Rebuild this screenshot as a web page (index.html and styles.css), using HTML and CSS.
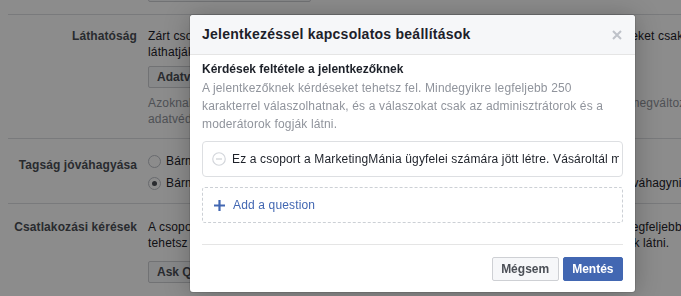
FILE: index.html
```html
<!DOCTYPE html>
<html lang="hu">
<head>
<meta charset="utf-8">
<title>Jelentkezéssel kapcsolatos beállítások</title>
<link rel="stylesheet" href="styles.css">
</head>
<body>
<div class="page">
  <div class="settings">
    <div class="row row-top">
      <div class="label"></div>
      <div class="content"><span class="btn">Csoporttípus módosítása</span></div>
    </div>
    <div class="row row-vis">
      <div class="label">Láthatóság</div>
      <div class="content">
        <p class="line">Zárt csoport: bárki megtalálhatja a csoportot és láthatja, hogy kik a tagja, de a bejegyzéseket csak</p>
        <p class="line">láthatják a tagok.</p>
        <span class="btn btn-gap">Adatvédelmi beállítás módosítása</span>
        <p class="line muted">Azoknak a csoportoknak, amelyeknek már több mint 5000 tagjuk van, utólag nem tudod megváltoztatni az</p>
        <p class="line muted">adatvédelmi beállításait.</p>
      </div>
    </div>
    <div class="row row-radio">
      <div class="label label-radio">Tagság jóváhagyása</div>
      <div class="content">
        <label class="radio"><span class="dot"></span>Bármelyik tag hozzáadhat új tagokat.</label>
        <label class="radio radio-2"><span class="dot dot-on"></span>Bármely tag hozzáadhat tagokat, de egy adminisztrátornak vagy egy moderátornak jóváhagynia kell őket.</label>
      </div>
    </div>
    <div class="row row-join">
      <div class="label">Csatlakozási kérések</div>
      <div class="content">
        <p class="line">A csoportodhoz csatlakozni kívánó személyeknek a csatlakozási kérelmük elküldésekor legfeljebb</p>
        <p class="line">tehetsz fel három kérdést. A válaszaikat csak az adminisztrátorok és a moderátorok fogják látni.</p>
        <span class="btn btn-gap2">Ask Questions</span>
      </div>
    </div>
  </div>
</div>

<div class="overlay"></div>

<div class="modal" role="dialog">
  <div class="modal-head">
    <h2 class="modal-title">Jelentkezéssel kapcsolatos beállítások</h2>
    <span class="close" aria-label="Bezárás">
      <svg width="10" height="10" viewBox="0 0 10 10"><path d="M1 1L9 9M9 1L1 9" stroke="#bec2c9" stroke-width="2" fill="none"/></svg>
    </span>
  </div>
  <div class="modal-body">
    <h3 class="sub">Kérdések feltétele a jelentkezőknek</h3>
    <p class="desc">A jelentkezőknek kérdéseket tehetsz fel. Mindegyikre legfeljebb 250 karakterrel válaszolhatnak, és a válaszokat csak az adminisztrátorok és a moderátorok fogják látni.</p>
    <div class="question">
      <svg class="minus" width="14" height="14" viewBox="0 0 14 14"><circle cx="7" cy="7" r="6.25" stroke="#d3d6db" stroke-width="1.2" fill="#fff"/><path d="M4 7H10" stroke="#c4c7cc" stroke-width="1.2"/></svg>
      <span class="q-text">Ez a csoport a MarketingMánia ügyfelei számára jött létre. Vásároltál ma már tőlünk?</span>
    </div>
    <div class="add">
      <svg class="plus" width="11" height="11" viewBox="0 0 11 11"><path d="M5.5 0V11M0 5.5H11" stroke="#4267b2" stroke-width="2.2"/></svg>
      <span>Add a question</span>
    </div>
  </div>
  <div class="modal-foot">
    <button class="mbtn mbtn-cancel">Mégsem</button>
    <button class="mbtn mbtn-save">Mentés</button>
  </div>
</div>
</body>
</html>
```

FILE: styles.css
```css
html, body {
  margin: 0;
  padding: 0;
  width: 681px;
  height: 296px;
  overflow: hidden;
  background: #fff;
  font-family: "Liberation Sans", Arial, Helvetica, sans-serif;
  font-size: 12px;
  letter-spacing: 0.15px;
  color: #1d2129;
}

.page {
  height: 296px;
  overflow: hidden;
}

.settings {
  margin-top: -20px;
  padding-left: 8px;
}

.row {
  display: flex;
  border-top: 1px solid #dddfe2;
}

.row-top {
  border-top: 0;
  padding-bottom: 12px;
}

.label {
  width: 129px;
  flex: none;
  text-align: right;
  font-weight: bold;
  letter-spacing: 0.1px;
  color: #4b4f56;
  line-height: 16px;
  padding-right: 11px;
  white-space: nowrap;
}

.content {
  flex: 1;
  white-space: nowrap;
  line-height: 16px;
}

.line {
  margin: 0;
}

.muted {
  color: #90949c;
}

.btn {
  display: inline-block;
  height: 20px;
  line-height: 20px;
  padding: 0 8px;
  border: 1px solid #ced0d4;
  border-radius: 2px;
  background: #f6f7f9;
  font-weight: bold;
  letter-spacing: 0;
  color: #4b4f56;
}

.row-vis .label,
.row-vis .content {
  padding-top: 13px;
}
.row-vis .content {
  padding-bottom: 11px;
}
.btn-gap {
  margin: 6px 0 7px;
}

.row-radio .content {
  padding-top: 14px;
  padding-bottom: 12px;
}
.label-radio {
  padding-top: 18px;
}
.radio {
  display: flex;
  align-items: center;
  gap: 5px;
  height: 16px;
}
.radio-2 {
  margin-top: 6px;
}
.dot {
  flex: none;
  width: 11px;
  height: 11px;
  border: 1px solid #bec2c9;
  border-radius: 50%;
  background: #fff;
  position: relative;
}
.dot-on::after {
  content: "";
  position: absolute;
  left: 3px;
  top: 3px;
  width: 5px;
  height: 5px;
  border-radius: 50%;
  background: #4b4f56;
}

.row-join .label,
.row-join .content {
  padding-top: 15px;
}
.btn-gap2 {
  margin-top: 10px;
}

.overlay {
  position: fixed;
  inset: 0;
  background: rgba(0, 0, 0, 0.45);
}

.modal {
  position: absolute;
  left: 190px;
  top: 15px;
  width: 445px;
  background: #fff;
  border-radius: 3px;
  box-shadow: 0 2px 26px rgba(0, 0, 0, 0.25), 0 0 0 1px rgba(0, 0, 0, 0.1);
  overflow: hidden;
}

.modal-head {
  height: 39px;
  display: flex;
  align-items: center;
  justify-content: space-between;
  padding: 0 13px 0 12px;
  background: #f6f7f9;
  border-bottom: 1px solid #e5e5e5;
  border-radius: 3px 3px 0 0;
}

.modal-title {
  margin: 0;
  font-size: 14px;
  font-weight: bold;
  letter-spacing: 0.25px;
  color: #1d2129;
  line-height: 19px;
}

.close {
  display: flex;
  width: 10px;
  height: 10px;
}

.modal-body {
  padding: 6px 12px 0;
}

.sub {
  margin: 0;
  font-size: 12px;
  font-weight: bold;
  letter-spacing: 0;
  line-height: 16px;
  color: #1d2129;
}

.desc {
  margin: 2px 0 0;
  color: #90949c;
  line-height: 18px;
}

.question {
  margin-top: 8px;
  height: 34px;
  border: 1px solid #dddfe2;
  border-radius: 4px;
  display: flex;
  align-items: center;
  padding-left: 9px;
  padding-right: 3px;
  gap: 6px;
  overflow: hidden;
}

.minus {
  flex: none;
}

.q-text {
  white-space: nowrap;
  overflow: hidden;
  color: #1d2129;
}

.add {
  margin-top: 10px;
  height: 34px;
  border: 1px dashed #ccd0d5;
  border-radius: 3px;
  display: flex;
  align-items: center;
  padding-left: 11px;
  gap: 8px;
  color: #4267b2;
}

.plus {
  flex: none;
}

.modal-foot {
  margin: 21px 12px 0;
  border-top: 1px solid #e5e5e5;
  padding: 12px 0 11px;
  display: flex;
  justify-content: flex-end;
  gap: 4px;
}

.mbtn {
  height: 24px;
  padding: 0 8.5px;
  border-radius: 2px;
  font-family: inherit;
  font-size: 12px;
  font-weight: bold;
  letter-spacing: 0;
  line-height: 22px;
  cursor: pointer;
}

.mbtn-cancel {
  background: #f6f7f9;
  border: 1px solid #ced0d4;
  color: #4b4f56;
}

.mbtn-save {
  background: #4267b2;
  border: 1px solid #4267b2;
  color: #fff;
}
```
